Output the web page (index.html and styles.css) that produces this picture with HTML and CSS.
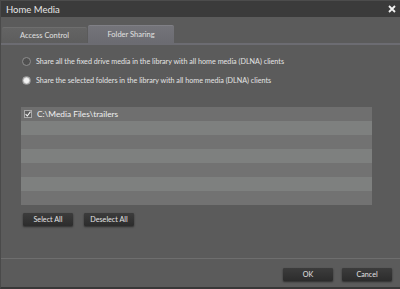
FILE: index.html
```html
<!DOCTYPE html>
<html lang="en">
<head>
    <meta charset="UTF-8">
    <title>Home Media</title>
    <link rel="stylesheet" href="styles.css">
</head>
<body>
    <div class="window">
        <div class="titlebar">
            <span class="title">Home Media</span>
            <svg class="close" width="8" height="8" viewBox="0 0 8 8">
                <path d="M1 1 L7 7 M7 1 L1 7" stroke="#f2f2f2" stroke-width="1.8"/>
            </svg>
        </div>

        <div class="tabs">
            <div class="tab">Access Control</div>
            <div class="tab active">Folder Sharing</div>
        </div>

        <div class="content">
            <div class="options">
                <label class="option">
                    <span class="radio"></span>
                    Share all the fixed drive media in the library with all home media (DLNA) clients
                </label>
                <label class="option">
                    <span class="radio checked"></span>
                    Share the selected folders in the library with all home media (DLNA) clients
                </label>
            </div>

            <div class="folder-list">
                <div class="row">
                    <span class="check">
                        <svg width="6" height="6" viewBox="0 0 6 6">
                            <path d="M0.6 3.2 L2.3 5 L5.5 0.6" stroke="#f0f0f0" stroke-width="1.1" fill="none"/>
                        </svg>
                    </span>
                    C:\Media Files\trailers
                </div>
                <div class="row"></div>
                <div class="row"></div>
                <div class="row"></div>
                <div class="row"></div>
                <div class="row"></div>
                <div class="row"></div>
            </div>

            <div class="list-buttons">
                <button class="btn">Select All</button>
                <button class="btn">Deselect All</button>
            </div>
        </div>

        <div class="footer">
            <button class="btn">OK</button>
            <button class="btn">Cancel</button>
        </div>
    </div>
</body>
</html>
```

FILE: styles.css
```css
body {
    margin: 0;
    background: #5b5b5b;
    font-family: Lato, 'Liberation Sans', sans-serif;
}
.window {
    width: 400px;
    height: 289px;
    display: flex;
    flex-direction: column;
    background: #5b5b5b;
    border-left: 1px solid #4a4a4a;
    border-bottom: 2px solid #383838;
    box-sizing: border-box;
}
.titlebar {
    height: 17px;
    flex: none;
    display: flex;
    align-items: center;
    justify-content: space-between;
    padding: 0 4px 0 5px;
    background: #3b3b3b;
    border-top: 1px solid #4c4c4c;
    box-sizing: border-box;
}
.title {
    color: #e6e6e6;
    font-size: 9.5px;
}
.close {
    display: block;
}
.tabs {
    height: 28px;
    flex: none;
    display: flex;
    align-items: flex-end;
    gap: 1px;
    padding-left: 1px;
    border-bottom: 2px solid #6c6c72;
    box-sizing: border-box;
}
.tab {
    width: 85px;
    height: 16px;
    display: flex;
    align-items: center;
    justify-content: center;
    color: #e0e0e0;
    font-size: 7.5px;
    background: linear-gradient(#646464, #5d5d5d);
    border-top: 1px solid #6e6e6e;
    border-radius: 2px 2px 0 0;
    box-sizing: border-box;
}
.tab.active {
    width: 86px;
    height: 18px;
    background: linear-gradient(#74747a, #6b6b71);
    border-top-color: #808086;
}
.content {
    flex: 1;
    padding: 0 28px 0 20px;
}
.options {
    display: flex;
    flex-direction: column;
    gap: 11px;
    padding: 12px 0 0 0;
}
.option {
    display: flex;
    align-items: center;
    gap: 5px;
    height: 8px;
    color: #e4e4e4;
    font-size: 7.2px;
}
.radio {
    width: 7px;
    height: 7px;
    margin-left: 1px;
    border-radius: 50%;
    border: 1px solid #8e8e8e;
    background: #505050;
    flex: none;
}
.radio.checked {
    background: radial-gradient(circle, #f2f2f2 0 40%, #b8b8b8 75%);
    border-color: #9a9a9a;
}
.folder-list {
    margin-top: 23px;
    height: 98px;
    display: flex;
    flex-direction: column;
}
.row {
    height: 14px;
    flex: none;
    display: flex;
    align-items: center;
    gap: 5px;
    padding-left: 3px;
    color: #f0f0f0;
    font-size: 8.3px;
    background: #727272;
}
.row:nth-child(even) {
    background: #7e807f;
}
.row:first-child {
    background: #6f6f6f;
}
.check {
    width: 8px;
    height: 8px;
    display: flex;
    align-items: center;
    justify-content: center;
    border: 1px solid #aaaaaa;
    background: #5e5e5e;
    box-sizing: border-box;
}
.list-buttons {
    display: flex;
    gap: 11px;
    margin-top: 8px;
    padding-left: 2px;
}
.btn {
    width: 50px;
    height: 13px;
    padding: 0;
    border: none;
    border-radius: 1px;
    background: linear-gradient(#3c3c3c, #2c2c2c);
    box-shadow: 0 1px 2px rgba(0, 0, 0, 0.5);
    color: #e2e2e2;
    font-family: inherit;
    font-size: 7.2px;
}
.footer {
    height: 29px;
    flex: none;
    display: flex;
    justify-content: flex-end;
    align-items: flex-start;
    gap: 9px;
    padding: 9px 8px 0 0;
    border-top: 1px solid #6e6e6e;
    box-sizing: border-box;
}
```
